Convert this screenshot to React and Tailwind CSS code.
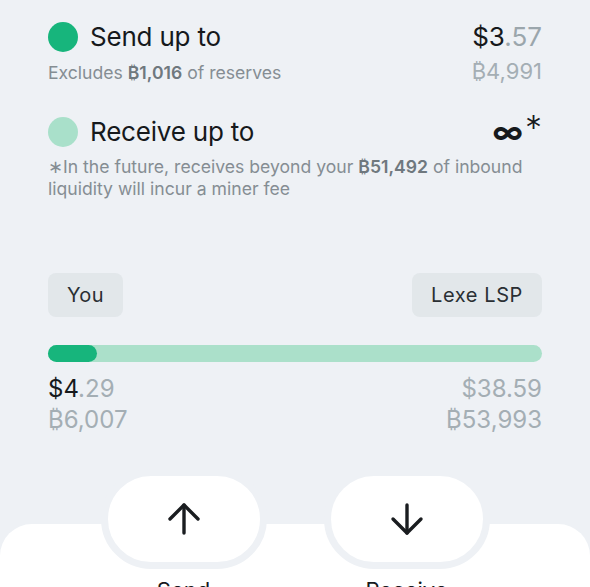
import React from "react";

function Arrow({ down }) {
  return (
    <svg width="34" height="34" viewBox="0 0 34 34" fill="none" stroke="#1a1d20" strokeWidth="3.4" strokeLinecap="round" strokeLinejoin="round" style={down ? { transform: "rotate(180deg)" } : undefined}>
      <path d="M17 3 L17 31" />
      <path d="M3 17 L17 3 L31 17" />
    </svg>
  );
}

export default function App() {
  return (
    <div className="w-[590px] h-[587px] overflow-hidden bg-[#eef1f5] font-['Inter',sans-serif] text-[#16191c]">
      <div className="px-12 pt-[21px]">
        <div className="flex h-8 items-center justify-between">
          <div className="flex items-center">
            <div className="h-[30px] w-[30px] rounded-full bg-[#17b57c]" />
            <span className="ml-3 text-[26px] leading-8 tracking-[-0.2px]">Send up to</span>
          </div>
          <div className="text-[26px] leading-8">
            $3<span className="text-[#9ba6ac]">.57</span>
          </div>
        </div>
        <div className="mt-[5px] flex h-[26px] items-center justify-between">
          <span className="mt-1 text-[17.6px] leading-[22px] text-[#858d93]">
            Excludes <span className="font-semibold text-[#6f787e]">₿1,016</span> of reserves
          </span>
          <span className="text-[22px] leading-[26px] text-[#a4aeb4]">₿4,991</span>
        </div>

        <div className="mt-8 flex h-8 items-center justify-between">
          <div className="flex items-center">
            <div className="h-[30px] w-[30px] rounded-full bg-[#a9e0ca]" />
            <span className="ml-3 text-[26px] leading-8 tracking-[-0.2px]">Receive up to</span>
          </div>
          <div className="flex items-start">
            <span className="text-[31px] font-bold leading-8">∞</span>
            <span className="-mt-[4px] ml-[2px] text-[34px] font-light leading-8">*</span>
          </div>
        </div>
        <p className="mt-2 text-[17.6px] leading-[22px] text-[#858d93]">
          ∗In the future, receives beyond your <span className="font-semibold text-[#6f787e]">₿51,492</span> of inbound liquidity will incur a miner fee
        </p>

        <div className="mt-[73px] flex justify-between">
          <div className="flex h-11 items-center rounded-lg bg-[#e2e7ea] px-[19px] text-[20px] tracking-[0.3px] text-[#2a2f33]">You</div>
          <div className="flex h-11 items-center rounded-lg bg-[#e2e7ea] px-[19px] text-[20px] tracking-[0.6px] text-[#2a2f33]">Lexe LSP</div>
        </div>

        <div className="mt-7 h-[17px] w-full rounded-full bg-[#abe0ca]">
          <div className="h-full w-[49px] rounded-full bg-[#17b57c]" />
        </div>

        <div className="mt-3 flex justify-between text-[24px] leading-[30px]">
          <div>
            <div>$4<span className="text-[#a4aeb4]">.29</span></div>
            <div className="mt-[1px] text-[#a4aeb4]">₿6,007</div>
          </div>
          <div className="text-right text-[#a4aeb4]">
            <div>$38.59</div>
            <div className="mt-[1px]">₿53,993</div>
          </div>
        </div>
      </div>

      <div className="mt-[89px] flex h-[200px] flex-col rounded-t-[32px] bg-white">
        <div className="-mt-[55px] flex justify-center gap-[57px]">
          <div className="flex flex-col items-center">
            <div className="flex h-[100px] w-[166px] items-center justify-center rounded-full border-[7px] border-[#eef1f5] bg-white">
              <Arrow />
            </div>
            <span className="mt-[7px] text-[22px] leading-7">Send</span>
          </div>
          <div className="flex flex-col items-center">
            <div className="flex h-[100px] w-[166px] items-center justify-center rounded-full border-[7px] border-[#eef1f5] bg-white">
              <Arrow down />
            </div>
            <span className="mt-[7px] text-[22px] leading-7">Receive</span>
          </div>
        </div>
      </div>
    </div>
  );
}
